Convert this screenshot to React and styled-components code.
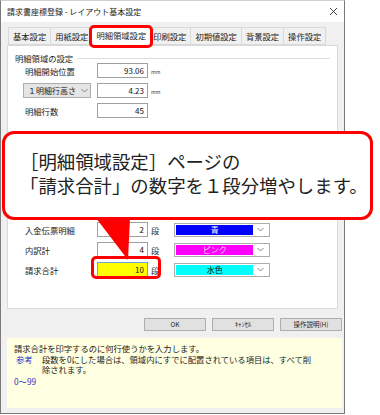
import React from 'react'
import styled, { createGlobalStyle } from 'styled-components'

const GlobalStyle = createGlobalStyle`
  html, body {
    margin: 0;
    padding: 0;
    background: #fff;
  }
  body {
    font-family: "Noto Sans CJK JP", "Noto Sans", sans-serif;
    color: #000;
  }
`

const Stage = styled.div`
  position: relative;
  width: 380px;
  height: 415px;
  overflow: hidden;
`

const Window = styled.div`
  width: 345px;
  height: 414px;
  box-sizing: border-box;
  border: 1px solid #7a7a7a;
  border-top-color: #d0d0d0;
  background: #f0f0f0;
  display: flex;
  flex-direction: column;
`

const TitleBar = styled.div`
  height: 21px;
  flex: none;
  background: #fff;
  display: flex;
  align-items: center;
  justify-content: space-between;
  padding: 0 6px 0 6px;
  font-size: 8px;
  color: #222;
`

const Body = styled.div`
  padding: 5px 4px 0 6px;
  display: flex;
  flex-direction: column;
`

const TabStrip = styled.div`
  display: flex;
  align-items: flex-end;
  height: 18px;
  padding-left: 2px;
`

const Tab = styled.div`
  position: relative;
  box-sizing: border-box;
  height: ${(p) => (p.$active ? '21px' : '18px')};
  margin: ${(p) => (p.$active ? '0 -2px -1px -2px' : '0 0 0 -1px')};
  padding: 0 4px;
  border: 1px solid #d9d9d9;
  border-bottom: ${(p) => (p.$active ? 'none' : '1px solid #d9d9d9')};
  background: ${(p) => (p.$active ? '#fff' : '#f0f0f0')};
  z-index: ${(p) => (p.$active ? 2 : 0)};
  font-size: 8.3px;
  line-height: ${(p) => (p.$active ? '19px' : '16px')};
  color: #222;
  white-space: nowrap;

  &::after {
    content: ${(p) => (p.$marked ? "''" : 'none')};
    position: absolute;
    left: -3px;
    right: -3px;
    top: -1px;
    bottom: -2px;
    border: 3px solid #ff0000;
    border-radius: 5px;
  }
`

const Panel = styled.div`
  box-sizing: border-box;
  width: 331px;
  height: 264px;
  border: 1px solid #d9d9d9;
  background: #fff;
  padding-top: 8px;
  display: flex;
  flex-direction: column;
`

const GroupTitle = styled.div`
  display: flex;
  align-items: center;
  height: 9px;
  margin: 0 7px 0 7px;
  font-size: 8.3px;
  line-height: 9px;
  color: #222;

  &::after {
    content: '';
    flex: 1;
    margin-left: 4px;
    border-top: 1px solid #dcdcdc;
  }
`

const Fields = styled.div`
  display: flex;
  flex-direction: column;
  gap: 5px;
  padding-left: 17px;
  margin-top: ${(p) => p.$offset || 0}px;
`

const Row = styled.div`
  display: flex;
  align-items: center;
  height: 15px;
`

const Label = styled.div`
  width: 72px;
  font-size: 8.3px;
  color: #222;
  white-space: nowrap;
`

const Combo = styled.div`
  box-sizing: border-box;
  width: 68px;
  height: 15px;
  margin: 0 6px 0 -2px;
  padding: 0 2px 0 4px;
  border: 1px solid #adadad;
  background: #e5e5e5;
  display: flex;
  align-items: center;
  justify-content: space-between;
  font-size: 8px;
  color: #222;
  white-space: nowrap;
`

const FieldWrap = styled.div`
  position: relative;
  display: flex;
  align-items: center;

  &::after {
    content: ${(p) => (p.$marked ? "''" : 'none')};
    position: absolute;
    left: -6px;
    top: -6px;
    width: 70px;
    height: 23px;
    box-sizing: border-box;
    border: 3px solid #ff0000;
    border-radius: 5px;
  }
`

const NumBox = styled.div`
  box-sizing: border-box;
  width: 51px;
  height: 15px;
  padding-right: 3px;
  border: 1px solid ${(p) => (p.$focus ? '#6aa6dc' : '#a0a0a0')};
  background: ${(p) => p.$bg || '#fff'};
  font-size: 8px;
  line-height: 13px;
  text-align: right;
  color: #111;
`

const Unit = styled.span`
  margin-left: 3px;
  font-size: ${(p) => (p.$small ? '5px' : '8.3px')};
  color: #333;
  align-self: ${(p) => (p.$small ? 'flex-end' : 'center')};
  margin-bottom: ${(p) => (p.$small ? '3px' : '0')};
`

const ColorSelect = styled.div`
  box-sizing: border-box;
  width: 96px;
  height: 14px;
  margin-left: 15px;
  padding: 1px;
  border: 1px solid #adadad;
  background: #fff;
  display: flex;
  align-items: stretch;
`

const Swatch = styled.div`
  flex: 1;
  background: ${(p) => p.$bg};
  color: ${(p) => p.$fg};
  font-size: 8px;
  line-height: 10px;
  text-align: center;
`

const ChevronCell = styled.div`
  width: 15px;
  display: flex;
  align-items: center;
  justify-content: center;
`

const ButtonRow = styled.div`
  display: flex;
  justify-content: flex-end;
  gap: 6px;
  margin: 9px -2px 0 0;
`

const Button = styled.div`
  box-sizing: border-box;
  width: 62px;
  height: 13px;
  border: 1px solid #adadad;
  background: #e1e1e1;
  font-size: 6.5px;
  line-height: 11px;
  text-align: center;
  color: #222;
`

const Help = styled.div`
  box-sizing: border-box;
  height: 70px;
  margin: 7px -2px 0 0;
  padding: 5px 7px;
  background: #ffffe1;
  font-size: 8.3px;
  line-height: 10.5px;
  color: #222;
`

const HelpLine = styled.div`
  display: flex;
  white-space: nowrap;
  color: ${(p) => (p.$blue ? '#3030c8' : '#222')};
  margin-top: ${(p) => p.$gap || 0}px;
`

const Note = styled.span`
  width: 26px;
  padding-left: 2px;
  color: #3030c8;
`

const Callout = styled.div`
  position: absolute;
  left: 2px;
  top: 131px;
  width: 371px;
  height: 89px;
  box-sizing: border-box;
  border: 3px solid #ff0000;
  border-radius: 12px;
  background: #fff;
  padding: 15px 0 0 15px;
  font-size: 18.4px;
  line-height: 24px;
  color: #222;
  white-space: nowrap;
  z-index: 5;
`

const Pointer = styled.svg`
  position: absolute;
  left: 94px;
  top: 216px;
  z-index: 6;
`

function Chevron({ color = '#777' }) {
  return (
    <svg width="7" height="5" viewBox="0 0 7 5">
      <path d="M0.5 1 L3.5 4 L6.5 1" fill="none" stroke={color} strokeWidth="0.9" />
    </svg>
  )
}

const tabs = ['基本設定', '用紙設定', '明細領域設定', '印刷設定', '初期値設定', '背景設定', '操作設定']

const bottomRows = [
  { label: '入金伝票明細', value: '2', color: '#0000ff', fg: '#ffffff', name: '青' },
  { label: '内訳計', value: '4', color: '#ff00ff', fg: '#ffc8ff', name: 'ピンク' },
  { label: '請求合計', value: '10', color: '#00ffff', fg: '#111', name: '水色', marked: true },
]

export default function App() {
  return (
    <Stage>
      <GlobalStyle />
      <Window>
        <TitleBar>
          <span>請求書座標登録 - レイアウト基本設定</span>
          <svg width="9" height="9" viewBox="0 0 9 9">
            <path d="M1 1 L8 8 M8 1 L1 8" stroke="#333" strokeWidth="0.9" />
          </svg>
        </TitleBar>
        <Body>
          <TabStrip>
            {tabs.map((t, i) => (
              <Tab key={t} $active={i === 2} $marked={i === 2}>
                {t}
              </Tab>
            ))}
          </TabStrip>
          <Panel>
            <GroupTitle>明細領域の設定</GroupTitle>
            <Fields>
              <Row>
                <Label>明細開始位置</Label>
                <NumBox>93.06</NumBox>
                <Unit $small>mm</Unit>
              </Row>
              <Row>
                <Combo>
                  <span>１明細行高さ</span>
                  <Chevron />
                </Combo>
                <NumBox>4.23</NumBox>
                <Unit $small>mm</Unit>
              </Row>
              <Row>
                <Label>明細行数</Label>
                <NumBox>45</NumBox>
              </Row>
            </Fields>
            <Fields $offset={104}>
              {bottomRows.map((r) => (
                <Row key={r.label}>
                  <Label>{r.label}</Label>
                  <FieldWrap $marked={r.marked}>
                    <NumBox $bg={r.marked ? '#ffff00' : '#fff'} $focus={r.marked}>
                      {r.value}
                    </NumBox>
                    <Unit>段</Unit>
                  </FieldWrap>
                  <ColorSelect>
                    <Swatch $bg={r.color} $fg={r.fg}>
                      {r.name}
                    </Swatch>
                    <ChevronCell>
                      <Chevron />
                    </ChevronCell>
                  </ColorSelect>
                </Row>
              ))}
            </Fields>
          </Panel>
          <ButtonRow>
            <Button>OK</Button>
            <Button>ｷｬﾝｾﾙ</Button>
            <Button>操作説明(H)</Button>
          </ButtonRow>
          <Help>
            <HelpLine>請求合計を印字するのに何行使うかを入力します。</HelpLine>
            <HelpLine>
              <Note>参考</Note>
              <span>
                段数を0にした場合は、領域内にすでに配置されている項目は、すべて削
                <br />
                除されます。
              </span>
            </HelpLine>
            <HelpLine $blue $gap={1}>0～99</HelpLine>
          </Help>
        </Body>
      </Window>
      <Callout>
        ［明細領域設定］ページの
        <br />
        「請求合計」の数字を１段分増やします。
      </Callout>
      <Pointer width="38" height="46" viewBox="0 0 38 46">
        <polygon points="2,2 36,2 34,44" fill="#ff0000" />
      </Pointer>
    </Stage>
  )
}
